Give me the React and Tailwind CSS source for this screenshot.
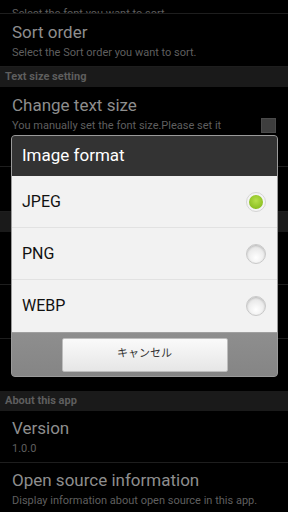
import React from 'react';

const font = { fontFamily: 'Roboto, "Noto Sans CJK JP", sans-serif' };

function Item({ title, sub, h, children }) {
  return (
    <div className={`flex items-center justify-between border-b border-[#1e1e1e] px-3 ${h}`}>
      <div className="flex flex-col leading-tight">
        <span className="text-[17px] text-[#8e8e8e]">{title}</span>
        {sub && <span className="text-[11px] text-[#5f5f5f] mt-[3px]">{sub}</span>}
      </div>
      {children}
    </div>
  );
}

function Header({ label }) {
  return (
    <div className="h-[20px] bg-[#1a1a1a] px-[5px] flex items-center text-[11px] font-bold text-[#5e5e5e]">
      {label}
    </div>
  );
}

function Radio({ on }) {
  if (on) {
    return (
      <div className="w-[20px] h-[20px] rounded-full bg-[#f4f4f4] border border-[#d4d4d4] flex items-center justify-center">
        <div className="w-[14px] h-[14px] rounded-full bg-[radial-gradient(circle_at_50%_40%,#b6e04a,#7cb313)]" />
      </div>
    );
  }
  return (
    <div className="w-[20px] h-[20px] rounded-full border border-[#c8c8c8] bg-[radial-gradient(circle_at_50%_70%,#ffffff,#dcdcdc)] shadow-[inset_0_1px_2px_rgba(0,0,0,0.18)]" />
  );
}

export default function App() {
  return (
    <div className="relative w-[288px] h-[512px] overflow-hidden bg-black" style={font}>
      {/* background preference list (dimmed) */}
      <div className="flex flex-col">
        <div className="h-[14px] overflow-hidden flex items-end border-b border-[#1e1e1e] px-3">
          <span className="text-[11px] text-[#5f5f5f] leading-[14px] translate-y-[8px]">Select the font you want to sort</span>
        </div>
        <Item title="Sort order" sub="Select the Sort order you want to sort." h="h-[53px] pt-[2px]" />
        <Header label="Text size setting" />
        <div className="h-[48px] flex items-start justify-between px-3 pt-[8px]">
          <div className="flex flex-col leading-tight">
            <span className="text-[17px] text-[#8e8e8e]">Change text size</span>
            <span className="text-[11px] text-[#5f5f5f] mt-[3px] pr-4 whitespace-nowrap">
              You manually set the font size.Please set it
            </span>
          </div>
          <div className="mt-[23px] shrink-0 w-[15px] h-[15px] bg-[#3e3e3e] border border-[#4a4a4a]" />
        </div>
        <div className="h-[32px] border-b border-[#1e1e1e]" />
        <div className="h-[45px] border-b border-[#1e1e1e]" />
        <div className="h-[20px] bg-[#1a1a1a]" />
        <div className="h-[53px] border-b border-[#1e1e1e]" />
        <div className="h-[54px] border-b border-[#1e1e1e]" />
        <div className="h-[52px]" />
        <Header label="About this app" />
        <Item title="Version" sub="1.0.0" h="h-[52px]" />
        <Item title="Open source information" sub="Display information about open source in this app." h="h-[52px]" />
      </div>

      {/* dialog */}
      <div className="absolute left-[11px] top-[135px] w-[267px] rounded-[4px] border border-[#9a9a9a] overflow-hidden bg-[#8a8a8a]">
        <div className="h-[40px] bg-[#333333] flex items-center px-[10px] text-[17px] text-white">Image format</div>
        <div className="bg-[#f2f2f2]">
          {[['JPEG', true], ['PNG', false], ['WEBP', false]].map(([label, on], i) => (
            <div
              key={label}
              className={`h-[52px] flex items-center justify-between pl-[10px] pr-[11px] ${i < 2 ? 'border-b border-[#e2e2e2]' : ''}`}
            >
              <span className="text-[16px] text-[#111]">{label}</span>
              <Radio on={on} />
            </div>
          ))}
        </div>
        <div className="h-[44px] bg-[linear-gradient(#8e8e8e,#858585)] flex items-center justify-center border-t border-[#a0a0a0]">
          <button className="w-[166px] h-[34px] rounded-[2px] bg-[linear-gradient(#fafafa,#e6e6e6)] border border-[#bdbdbd] text-[11px] text-[#333]">
            キャンセル
          </button>
        </div>
      </div>
    </div>
  );
}
